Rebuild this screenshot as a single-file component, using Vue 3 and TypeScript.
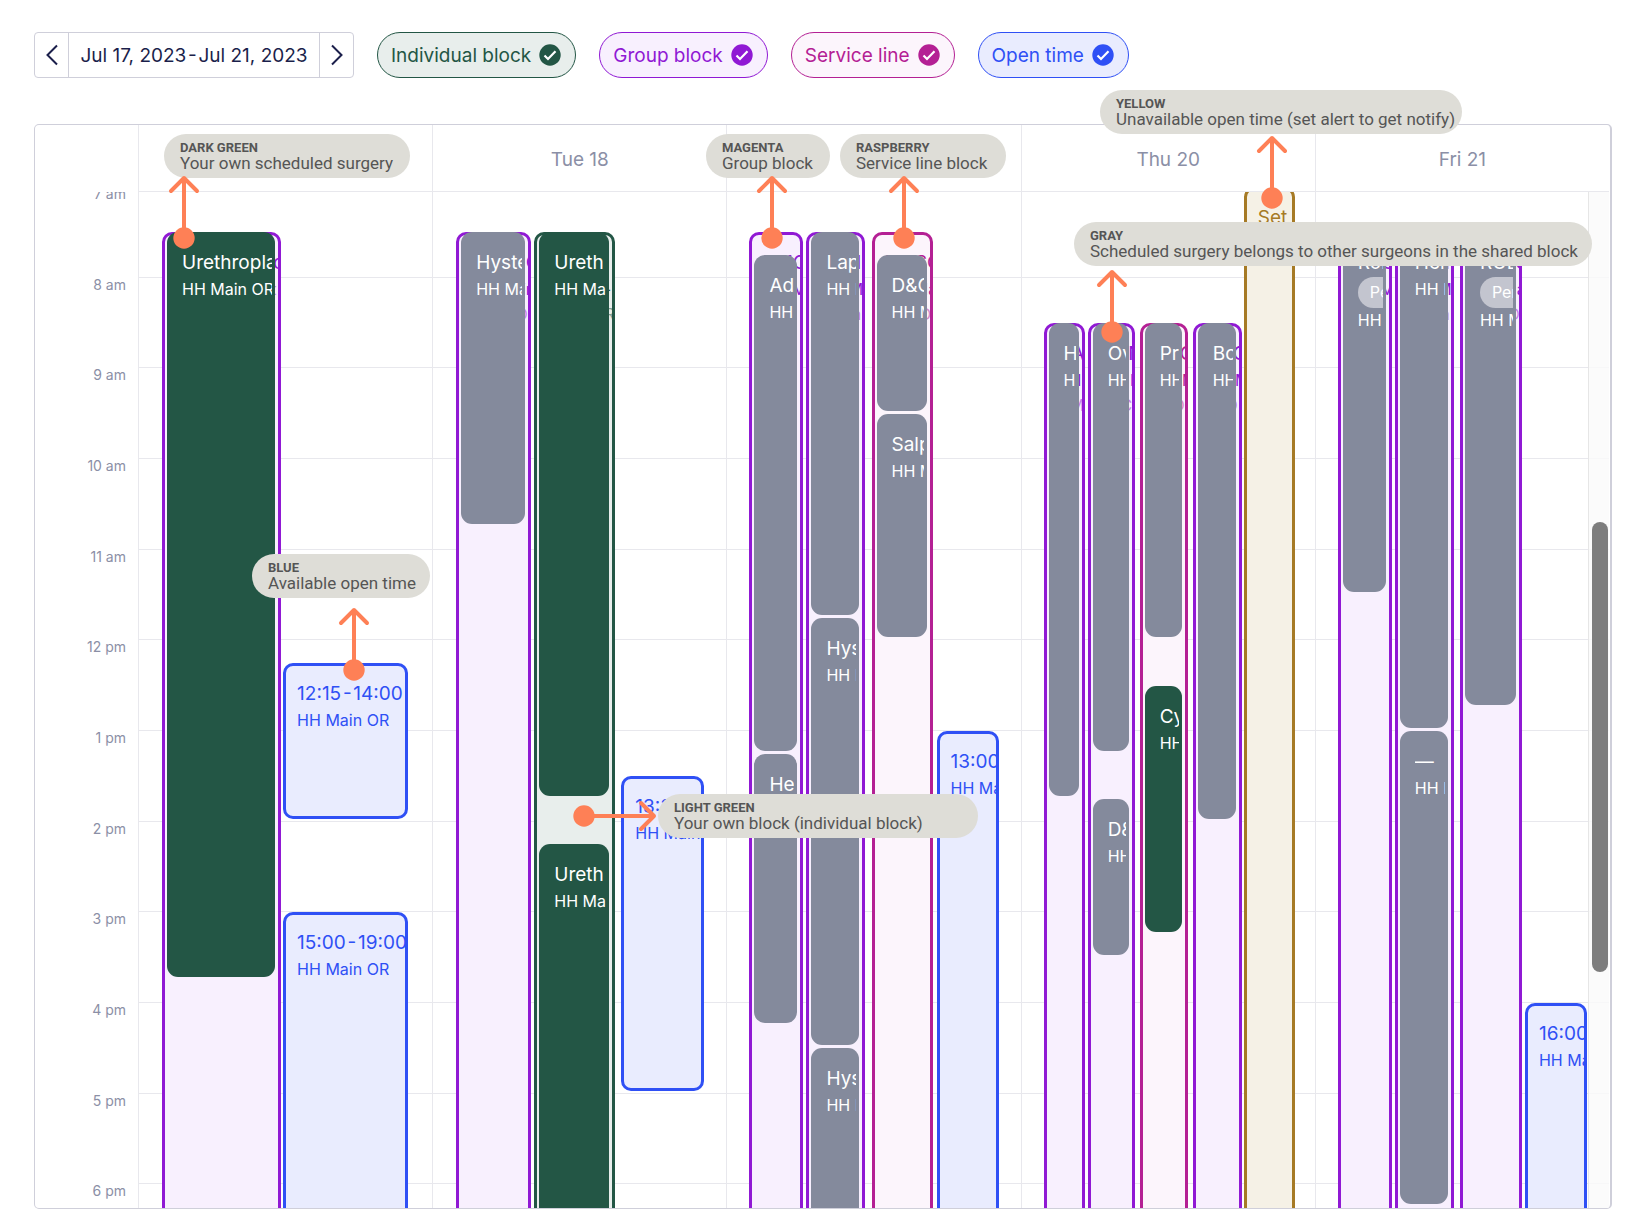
<script setup lang="ts">
type Kind = 'group' | 'service' | 'individual' | 'open' | 'alert'

interface Surgery {
  from: number
  to: number
  title: string
  site: string
  own?: boolean
  tag?: string
}

interface Block {
  kind: Kind
  left: number
  width: number
  from: number
  to: number
  title: string
  site: string
  note?: string
  surgeries?: Surgery[]
}

interface Day {
  name: string
  blocks: Block[]
}

interface Note {
  label: string
  text: string
  x: number
  y: number
  width: number
}

interface Arrow {
  x: number
  y: number
  side?: boolean
}

const FIRST_HOUR = 7
const DAY_UNITS = 293
const PAGE_UNITS = 1636

const hours = ['7 am', '8 am', '9 am', '10 am', '11 am', '12 pm', '1 pm', '2 pm', '3 pm', '4 pm', '5 pm', '6 pm']

const filters: { kind: Kind; text: string }[] = [
  { kind: 'individual', text: 'Individual block' },
  { kind: 'group', text: 'Group block' },
  { kind: 'service', text: 'Service line' },
  { kind: 'open', text: 'Open time' },
]

const site = 'HH Main OR'

// Ranges are set with hair spaces around the hyphen.
const range = (a: string, b: string) => `${a}\u200a-\u200a${b}`

const days: Day[] = [
  {
    name: 'Mon 17',
    blocks: [
      {
        kind: 'group', left: 23, width: 119, from: 7.5, to: 19, title: 'Urology Group', site: '', note: 'Released Oct',
        surgeries: [{ from: 7.5, to: 15.75, title: 'Urethroplasty', site, own: true }],
      },
      { kind: 'open', left: 144, width: 125, from: 12.25, to: 14, title: range('12:15', '14:00'), site },
      { kind: 'open', left: 144, width: 125, from: 15, to: 19, title: range('15:00', '19:00'), site },
    ],
  },
  {
    name: 'Tue 18',
    blocks: [
      {
        kind: 'group', left: 23, width: 75, from: 7.5, to: 19, title: 'GYNOC', site, note: 'Open OR',
        surgeries: [{ from: 7.5, to: 10.75, title: 'Hysterectomy', site }],
      },
      {
        kind: 'individual', left: 101, width: 81, from: 7.5, to: 19, title: 'Urolo', site: 'HH Mai-', note: 'Block 3R',
        surgeries: [
          { from: 7.5, to: 13.75, title: 'Ureth', site: 'HH Ma', own: true },
          { from: 14.25, to: 19, title: 'Ureth', site: 'HH Ma', own: true },
        ],
      },
      { kind: 'open', left: 188, width: 83, from: 13.5, to: 17, title: range('13:30', '17:00'), site },
    ],
  },
  {
    name: 'Wed 19',
    blocks: [
      {
        kind: 'group', left: 22, width: 54, from: 7.5, to: 19, title: 'TMC', site: 'HH M', note: 'Ops',
        surgeries: [
          { from: 7.75, to: 13.25, title: 'Ad', site: 'HH' },
          { from: 13.25, to: 16.25, title: 'He', site: 'HH' },
        ],
      },
      {
        kind: 'group', left: 79, width: 59, from: 7.5, to: 19, title: 'GYNC', site, note: 'Open',
        surgeries: [
          { from: 7.5, to: 11.75, title: 'Laparoscopy', site },
          { from: 11.75, to: 16.5, title: 'Hysterectomy', site },
          { from: 16.5, to: 19, title: 'Hysterectomy', site },
        ],
      },
      {
        kind: 'service', left: 144, width: 61, from: 7.5, to: 19, title: 'TMSC', site, note: 'MIS O',
        surgeries: [
          { from: 7.75, to: 9.5, title: 'D&C', site },
          { from: 9.5, to: 12, title: 'Salpingectomy', site },
        ],
      },
      { kind: 'open', left: 209, width: 62, from: 13, to: 19, title: range('13:00', '19:00'), site },
    ],
  },
  {
    name: 'Thu 20',
    blocks: [
      {
        kind: 'group', left: 22, width: 41, from: 8.5, to: 19, title: 'GA', site: 'HH', note: 'OM',
        surgeries: [{ from: 8.5, to: 13.75, title: 'HA', site: 'HH' }],
      },
      {
        kind: 'group', left: 66, width: 47, from: 8.5, to: 19, title: 'GYN', site: 'HH M', note: 'MIC',
        surgeries: [
          { from: 8.5, to: 13.25, title: 'Ovarian', site },
          { from: 13.75, to: 15.5, title: 'D&C', site },
        ],
      },
      {
        kind: 'service', left: 118, width: 48, from: 8.5, to: 19, title: 'GYO', site: 'HH M', note: 'MIO',
        surgeries: [
          { from: 8.5, to: 12, title: 'Pr', site },
          { from: 12.5, to: 15.25, title: 'Cystoscopy', site, own: true },
        ],
      },
      {
        kind: 'group', left: 171, width: 49, from: 8.5, to: 19, title: 'GYO', site, note: 'MIO',
        surgeries: [{ from: 8.5, to: 14, title: 'Bowel', site }],
      },
      { kind: 'alert', left: 222, width: 51, from: 7, to: 19, title: 'Set', site: '' },
    ],
  },
  {
    name: 'Fri 21',
    blocks: [
      {
        kind: 'group', left: 22, width: 54, from: 7.5, to: 19, title: 'TMC', site: 'HH M', note: 'MIS',
        surgeries: [{ from: 7.5, to: 11.5, title: 'Robotic', site: 'HH', tag: 'Pending' }],
      },
      {
        kind: 'group', left: 79, width: 59, from: 7.5, to: 19, title: 'GYNC', site, note: 'Open',
        surgeries: [
          { from: 7.5, to: 13, title: 'Hernia', site },
          { from: 13, to: 18.25, title: '—', site },
        ],
      },
      {
        kind: 'group', left: 144, width: 62, from: 7.5, to: 19, title: 'GYNC', site, note: 'MIS O',
        surgeries: [{ from: 7.5, to: 12.75, title: 'ROBOT', site, tag: 'Pending' }],
      },
      { kind: 'open', left: 209, width: 62, from: 16, to: 19, title: range('16:00', '19:00'), site },
    ],
  },
]

const notes: Note[] = [
  { label: 'DARK GREEN', text: 'Your own scheduled surgery', x: 164, y: 134, width: 246 },
  { label: 'MAGENTA', text: 'Group block', x: 706, y: 134, width: 124 },
  { label: 'RASPBERRY', text: 'Service line block', x: 840, y: 134, width: 166 },
  { label: 'YELLOW', text: 'Unavailable open time (set alert to get notify)', x: 1100, y: 90, width: 362 },
  { label: 'GRAY', text: 'Scheduled surgery belongs to other surgeons in the shared block', x: 1074, y: 222, width: 518 },
  { label: 'BLUE', text: 'Available open time', x: 252, y: 554, width: 178 },
  { label: 'LIGHT GREEN', text: 'Your own block (individual block)', x: 658, y: 794, width: 320 },
]

const arrows: Arrow[] = [
  { x: 168, y: 175 },
  { x: 756, y: 175 },
  { x: 888, y: 175 },
  { x: 1256, y: 135 },
  { x: 1096, y: 269 },
  { x: 338, y: 607 },
  { x: 573, y: 800, side: true },
]

// One hour is 272/3 px tall, so three hours fill 272 px.
const offset = (h: number) => Math.round((h * 272) / 3)

const span = (from: number, to: number, origin: number) => ({
  top: `${offset(from - FIRST_HOUR) - offset(origin - FIRST_HOUR)}px`,
  height: `${offset(to - FIRST_HOUR) - offset(from - FIRST_HOUR) - 3}px`,
})

const blockStyle = (b: Block) => ({
  ...span(b.from, b.to, FIRST_HOUR),
  left: `${(b.left / DAY_UNITS) * 100}%`,
  width: `${(b.width / DAY_UNITS) * 100}%`,
})

const across = (x: number) => `${(x / PAGE_UNITS) * 100}%`
</script>

<template>
  <div class="page">
    <header class="toolbar">
      <div class="picker">
        <button type="button" class="step" aria-label="Previous week">
          <svg width="12" height="22" viewBox="0 0 12 22"><path d="M11 1.500L1.500 11L11 20.500" /></svg>
        </button>
        <button type="button" class="range">{{ range('Jul 17, 2023', 'Jul 21, 2023') }}</button>
        <button type="button" class="step" aria-label="Next week">
          <svg width="12" height="22" viewBox="0 0 12 22"><path d="M1 1.500L10.500 11L1 20.500" /></svg>
        </button>
      </div>
      <button v-for="f in filters" :key="f.kind" type="button" aria-pressed="true" class="chip" :class="f.kind">
        {{ f.text }}
        <svg width="22" height="22" viewBox="0 0 22 22">
          <circle cx="11" cy="11" r="10.700" fill="currentColor" />
          <path d="M5.500 11.500L9 15L16.500 7.200" fill="none" stroke="#fff" stroke-width="2.200" />
        </svg>
      </button>
    </header>

    <main class="calendar">
      <div class="heads">
        <div class="corner"></div>
        <div v-for="d in days" :key="d.name" class="head">{{ d.name }}</div>
      </div>
      <div class="view">
        <div class="sheet">
          <div class="times">
            <div v-for="h in hours" :key="h" class="time">{{ h }}</div>
          </div>
          <section v-for="d in days" :key="d.name" class="day" :aria-label="d.name">
            <div v-for="h in hours" :key="h" class="slot"></div>
            <article v-for="(b, i) in d.blocks" :key="i" class="block" :class="b.kind" :style="blockStyle(b)">
              <div class="label">
                <div class="title">{{ b.title }}</div>
                <div class="site">{{ b.site }}</div>
                <div v-if="b.note" class="note">{{ b.note }}</div>
              </div>
              <div
                v-for="(s, j) in b.surgeries"
                :key="j"
                class="surgery"
                :class="{ own: s.own }"
                :style="span(s.from, s.to, b.from)"
              >
                <div class="clip">
                  <div class="title">{{ s.title }}</div>
                  <div v-if="s.tag" class="tag">{{ s.tag }}</div>
                  <div class="site">{{ s.site }}</div>
                </div>
              </div>
            </article>
          </section>
        </div>
        <div class="track"><div class="thumb"></div></div>
      </div>
    </main>

    <div v-for="n in notes" :key="n.label" class="callout" :style="{ left: across(n.x), top: n.y + 'px', width: n.width + 'px' }">
      <strong>{{ n.label }}</strong>
      <span>{{ n.text }}</span>
    </div>
    <template v-for="(a, i) in arrows" :key="i">
      <svg v-if="a.side" class="arrow" :style="{ left: across(a.x), top: a.y + 'px' }" width="86" height="32" viewBox="0 0 86 32">
        <path d="M11 16H81M68 3L81 16L68 29" />
        <circle cx="11" cy="16" r="10.700" />
      </svg>
      <svg v-else class="arrow" :style="{ left: across(a.x), top: a.y + 'px' }" width="32" height="75" viewBox="0 0 32 75">
        <path d="M16 63V3M3 16L16 3L29 16" />
        <circle cx="16" cy="63" r="10.700" />
      </svg>
    </template>
  </div>
</template>

<style>
body {
  margin: 0;
  background: #fff;
}
</style>

<style scoped>
.page {
  position: relative;
  box-sizing: border-box;
  height: 100vh;
  display: flex;
  flex-direction: column;
  gap: 46px;
  padding: 32px 24px 1px 34px;
  overflow: hidden;
  font-family: Inter, "Liberation Sans", sans-serif;
}

button {
  font: inherit;
  color: inherit;
  cursor: pointer;
}

.toolbar {
  display: flex;
  gap: 23px;
  font-size: 19px;
}

.picker {
  display: flex;
  box-sizing: border-box;
  height: 46px;
  border: 1px solid #cfcfda;
  border-radius: 4px;
  color: #1b1f4b;
}

.picker button {
  padding: 0;
  border: 0;
  background: none;
}

.picker .step {
  width: 33px;
  display: grid;
  place-items: center;
}

.picker .step svg {
  fill: none;
  stroke: currentColor;
  stroke-width: 2;
}

.picker .range {
  width: 252px;
  border: solid #cfcfda;
  border-width: 0 1px;
  white-space: nowrap;
}

.chip {
  display: flex;
  align-items: center;
  gap: 8px;
  height: 46px;
  padding: 0 14px 0 13px;
  border: 1px solid;
  border-radius: 23px;
  white-space: nowrap;
}

.individual { color: #235645; background: #e8eeec; }
.group { color: #9019d4; background: #f8f0fe; }
.service { color: #b42094; background: #fcf5fc; }
.open { color: #2f50f5; background: #e9ecfe; }
.alert { color: #a67a25; background: #f5f1e6; }

.calendar {
  flex: 1;
  min-height: 0;
  display: flex;
  flex-direction: column;
  padding-right: 1px;
  border: 1px solid #cfcfda;
  border-right-width: 2px;
  border-radius: 5px;
  overflow: hidden;
}

.heads {
  display: flex;
  height: 67px;
}

.corner,
.times {
  width: 103px;
  flex: none;
}

.head {
  flex: 1;
  border-left: 1px solid #e8e8ed;
  border-bottom: 1px solid #e8e8ed;
  line-height: 70px;
  text-align: center;
  font-size: 19px;
  color: #8b8fa6;
}

.view {
  position: relative;
  flex: 1;
  min-height: 0;
  overflow: hidden;
}

.sheet {
  display: flex;
  height: 1088px;
  margin-top: -6px;
}

.times,
.day {
  display: grid;
  grid-template-rows: repeat(12, 1fr);
}

.time {
  padding-right: 12px;
  text-align: right;
  font-size: 14px;
  line-height: 16px;
  color: #8b8fa6;
}

.day {
  position: relative;
  flex: 1;
  border-left: 1px solid #e8e8ed;
}

.slot {
  border-top: 1px solid #e8e8ed;
}

.block {
  position: absolute;
  box-sizing: border-box;
  margin-top: 1px;
  border: 3px solid;
  border-radius: 10px;
}

.label {
  height: 100%;
  box-sizing: border-box;
  padding: 14px 0 0 11px;
  overflow: hidden;
  white-space: nowrap;
}

.title {
  font-size: 19px;
  line-height: 28px;
}

.site,
.note {
  font-size: 16px;
  line-height: 25px;
}

.note {
  opacity: 0.5;
}

.surgery {
  position: absolute;
  left: 2px;
  right: 3px;
  box-sizing: border-box;
  margin-top: -3px;
  padding: 17px 3px 0 15px;
  border-radius: 11px;
  background: #848a9c;
  color: #fff;
}

.surgery.own {
  background: #235645;
}

.clip {
  overflow: hidden;
  white-space: nowrap;
}

.tag {
  width: max-content;
  padding: 0 12px;
  border-radius: 16px;
  background: #c3c5cf;
  font-size: 16px;
  line-height: 31px;
}

.track {
  position: absolute;
  top: 0;
  right: 0;
  bottom: 0;
  width: 20px;
  border-left: 1px solid #e6e6e6;
  background: rgba(250, 250, 250, 0.8);
}

.thumb {
  width: 16px;
  height: 450px;
  margin: 330px 0 0 3px;
  border-radius: 8px;
  background: #7d7d7d;
}

.callout {
  position: absolute;
  box-sizing: border-box;
  display: flex;
  flex-direction: column;
  height: 44px;
  padding: 8px 16px 0;
  border-radius: 22px;
  background: #deddd7;
  color: #555;
  font-family: Roboto, "Liberation Sans", sans-serif;
  white-space: nowrap;
}

.callout strong {
  font-size: 13px;
  line-height: 12px;
}

.callout span {
  font-size: 17px;
  line-height: 18px;
}

.arrow {
  position: absolute;
  fill: none;
  stroke: #fe8056;
  stroke-width: 4;
  stroke-linecap: round;
  stroke-linejoin: round;
}

.arrow circle {
  fill: #fe8056;
  stroke: none;
}
</style>
